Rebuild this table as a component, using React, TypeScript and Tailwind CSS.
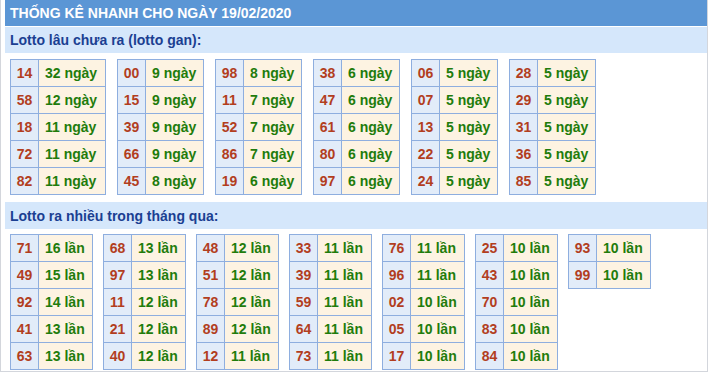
import React from "react";

type Row = [string, string];

const ganTables: Row[][] = [
  [["14", "32"], ["58", "12"], ["18", "11"], ["72", "11"], ["82", "11"]],
  [["00", "9"], ["15", "9"], ["39", "9"], ["66", "9"], ["45", "8"]],
  [["98", "8"], ["11", "7"], ["52", "7"], ["86", "7"], ["19", "6"]],
  [["38", "6"], ["47", "6"], ["61", "6"], ["80", "6"], ["97", "6"]],
  [["06", "5"], ["07", "5"], ["13", "5"], ["22", "5"], ["24", "5"]],
  [["28", "5"], ["29", "5"], ["31", "5"], ["36", "5"], ["85", "5"]],
];

const hotTables: Row[][] = [
  [["71", "16"], ["49", "15"], ["92", "14"], ["41", "13"], ["63", "13"]],
  [["68", "13"], ["97", "13"], ["11", "12"], ["21", "12"], ["40", "12"]],
  [["48", "12"], ["51", "12"], ["78", "12"], ["89", "12"], ["12", "11"]],
  [["33", "11"], ["39", "11"], ["59", "11"], ["64", "11"], ["73", "11"]],
  [["76", "11"], ["96", "11"], ["02", "10"], ["05", "10"], ["17", "10"]],
  [["25", "10"], ["43", "10"], ["70", "10"], ["83", "10"], ["84", "10"]],
  [["93", "10"], ["99", "10"]],
];

function StatTable({ rows, unit, valueW }: { rows: Row[]; unit: string; valueW: string }) {
  return (
    <div className="flex flex-col border border-[#8eaedf] divide-y divide-[#8eaedf]">
      {rows.map(([num, count]) => (
        <div key={num} className="flex h-[26px] box-content divide-x divide-[#8eaedf]">
          <div className="flex w-[27px] box-content items-center justify-center bg-[#e2ecf9] text-[#b23e1e]">{num}</div>
          <div className={`flex box-content items-center bg-[#fdf3e2] pl-[6px] text-[#1f7c0c] whitespace-nowrap ${valueW}`}>
            {count} {unit}
          </div>
        </div>
      ))}
    </div>
  );
}

export default function App() {
  return (
    <div
      className="w-[708px] h-[372px] border-l border-r border-b border-[#d3d6dc] bg-white pl-1 text-[14px] font-bold leading-none"
      style={{ fontFamily: '"Liberation Sans", Arial, sans-serif' }}
    >
      <div className="flex h-[26px] items-center bg-[#5b96d5] px-[5px] text-white">THỐNG KÊ NHANH CHO NGÀY 19/02/2020</div>
      <div className="mt-px flex h-[26px] items-center bg-[#d5e7fb] px-[5px] text-[#1b3f92]">Lotto lâu chưa ra (lotto gan):</div>
      <div className="flex items-start gap-[11px] px-[5px] pt-[6px]">
        {ganTables.map((rows, i) => (
          <StatTable key={i} rows={rows} unit="ngày" valueW={i === 0 ? "w-[60px]" : "w-[51px]"} />
        ))}
      </div>
      <div className="mt-[7px] flex h-[27px] items-center bg-[#d5e7fb] px-[5px] text-[#1b3f92]">Lotto ra nhiều trong tháng qua:</div>
      <div className="flex items-start gap-[10px] px-[5px] pt-[5px]">
        {hotTables.map((rows, i) => (
          <StatTable key={i} rows={rows} unit="lần" valueW="w-[47px]" />
        ))}
      </div>
    </div>
  );
}
